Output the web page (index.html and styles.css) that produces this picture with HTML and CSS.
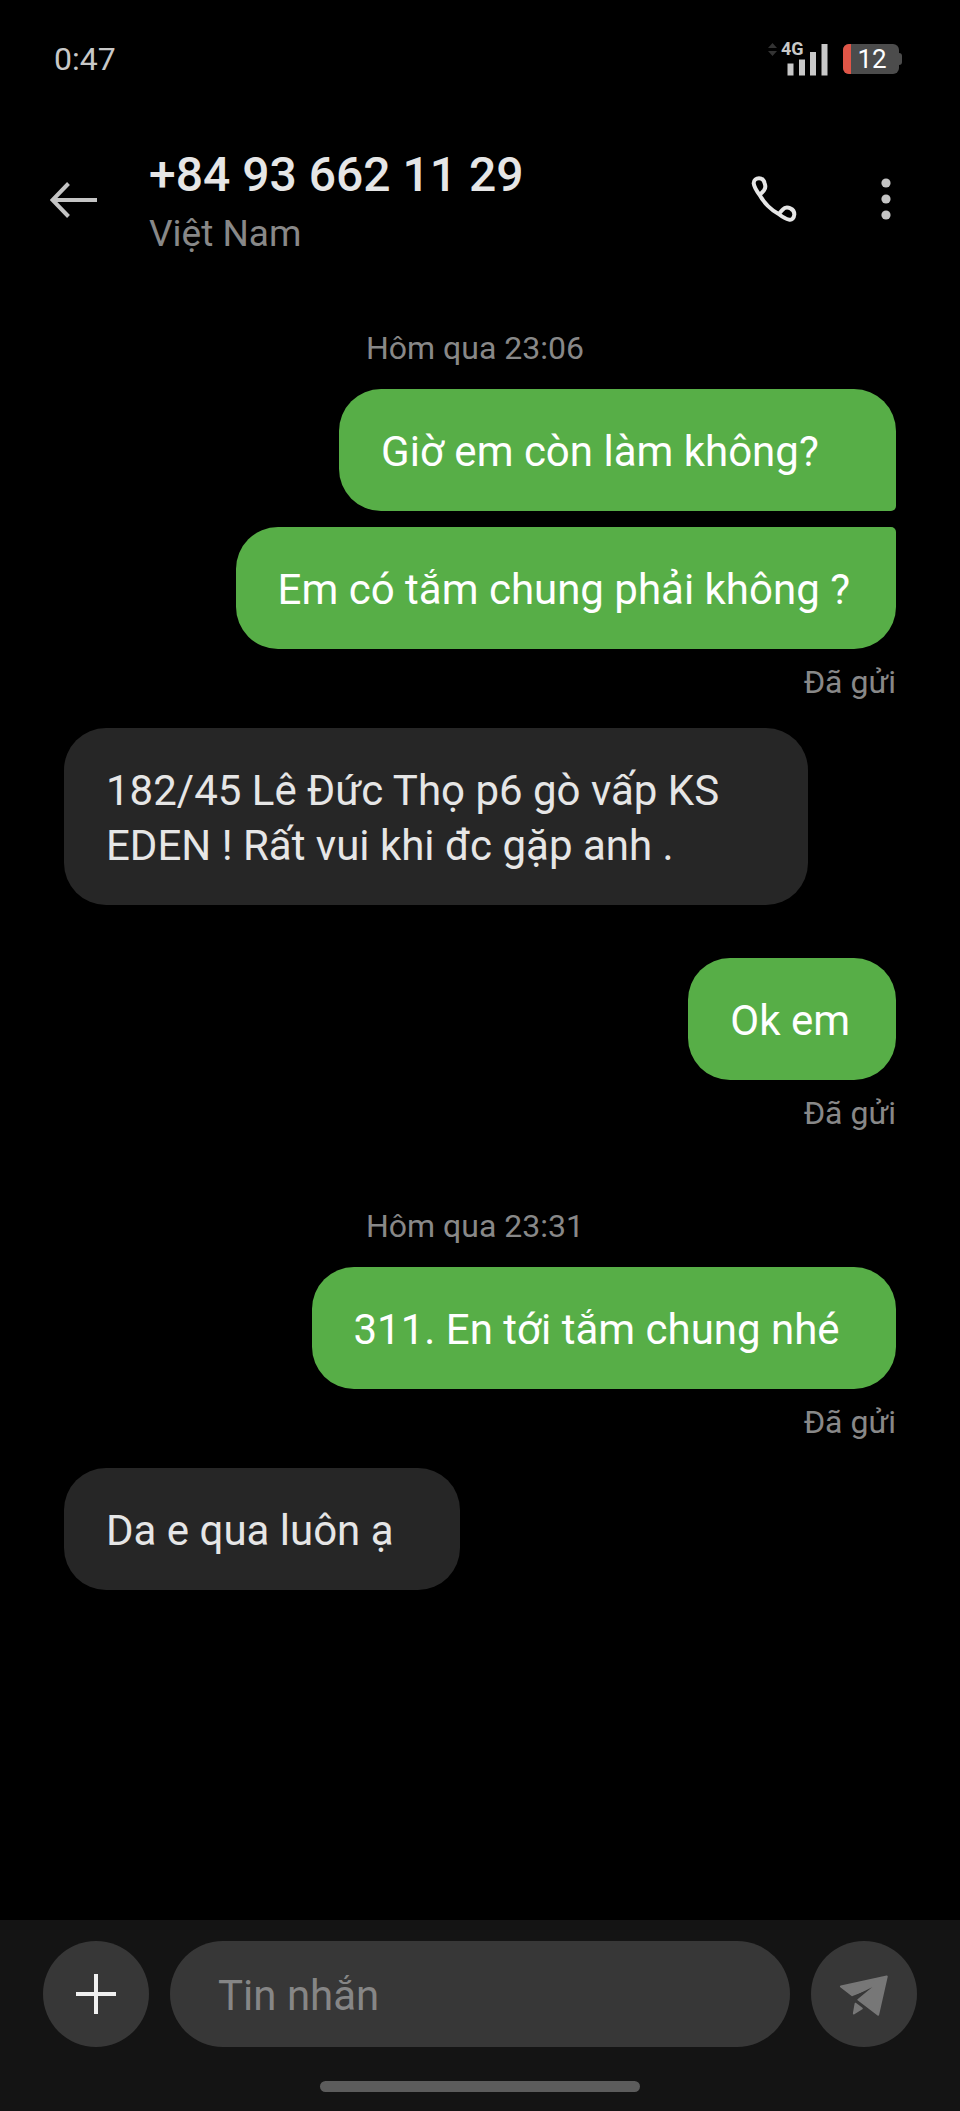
FILE: index.html
```html
<!DOCTYPE html>
<html lang="vi">
<head>
<meta charset="utf-8">
<meta name="viewport" content="width=device-width, initial-scale=1">
<title>+84 93 662 11 29</title>
<link rel="stylesheet" href="styles.css">
</head>
<body>
<div class="statusbar">
  <time class="clock">0:47</time>
  <div class="indicators">
    <div class="signal">
      <svg class="signal-icon" viewBox="0 0 60 34" aria-hidden="true">
        <path class="data-arrows" d="M0 6 4.500 1 9 6zM0 9h9l-4.500 5z"/>
        <path class="bars" d="M19.500 21.500h6v12h-6zM31 17.500h6v16h-6zM42 10h6v23.500h-6zM53.500 2h6v31.500h-6z"/>
      </svg>
      <span class="network">4G</span>
    </div>
    <div class="battery">
      <svg class="battery-icon" viewBox="0 0 60 32" aria-hidden="true">
        <rect x="1" y="1" width="56" height="30" rx="6" fill="#4c4c4c"/>
        <path d="M56 10h1a3 3 0 0 1 3 3v6a3 3 0 0 1-3 3h-1z" fill="#4c4c4c"/>
        <path d="M9 1H7a6 6 0 0 0-6 6v18a6 6 0 0 0 6 6h2z" fill="#e05547"/>
      </svg>
      <span class="level">12</span>
    </div>
  </div>
</div>

<header class="header">
  <button class="icon-button" type="button" aria-label="Quay lại">
    <svg class="icon-back" viewBox="0 0 48 48" fill="none" stroke="#c4c4c4" stroke-width="4" aria-hidden="true"><path d="M47 25H3M18.500 8.500 2.500 25l16 16.500"/></svg>
  </button>
  <div class="contact">
    <h1 class="contact-name">+84 93 662 11 29</h1>
    <p class="contact-place">Việt Nam</p>
  </div>
  <button class="icon-button" type="button" aria-label="Gọi">
    <svg class="icon-call" viewBox="90 74 144 144" fill="none" stroke="#e6e6e6" stroke-width="12" stroke-linejoin="round" aria-hidden="true"><path d="M119 134C109 121 102 107 101 99C101 89 109 84 117 84C127 84 132 91 134 99C138 110 137 114 132 120L119 134C131 156 154 180 176 191L188 178C194 171 203 170 211 174C220 178 223 184 223 192C222 203 216 210 207 208C197 206 185 198 176 191"/></svg>
  </button>
  <button class="icon-button" type="button" aria-label="Thêm tùy chọn">
    <svg class="icon-more" viewBox="0 0 48 48" fill="#c4c4c4" aria-hidden="true"><circle cx="24" cy="8" r="4.600"/><circle cx="24" cy="24" r="4.600"/><circle cx="24" cy="40" r="4.600"/></svg>
  </button>
</header>

<main class="thread">
  <time class="date">Hôm qua 23:06</time>
  <p class="bubble sent joined-below">Giờ em còn làm không?&nbsp;&nbsp;&nbsp;</p>
  <p class="bubble sent joined-above">Em có tắm chung phải không ?</p>
  <p class="receipt">Đã gửi</p>
  <p class="bubble received">182/45 Lê Đức Thọ p6 gò vấp KS EDEN ! Rất vui khi đc gặp anh .</p>
  <p class="bubble sent reply">Ok em</p>
  <p class="receipt">Đã gửi</p>
  <time class="date later">Hôm qua 23:31</time>
  <p class="bubble sent">311. En tới tắm chung nhé&nbsp;</p>
  <p class="receipt">Đã gửi</p>
  <p class="bubble received">Da e qua luôn ạ&nbsp;&nbsp;</p>
</main>

<footer class="footer">
  <form class="composer">
    <button class="round-button" type="button" aria-label="Đính kèm">
      <svg viewBox="0 0 106 106" stroke="#f0f0f0" stroke-width="4" aria-hidden="true"><path d="M33 53h40M53 33v40"/></svg>
    </button>
    <input class="message-input" type="text" placeholder="Tin nhắn" aria-label="Tin nhắn">
    <button class="round-button" type="button" aria-label="Gửi">
      <svg viewBox="633 122 319 319" fill="#777" stroke="#777" stroke-width="6" stroke-linejoin="round" aria-hidden="true"><path d="M723 259 861 229 835 344 775 298 815 263 757 285zM767 311 786 325 762 340z"/><path d="M756 291 817 261 771 299" fill="#373737" stroke="none"/></svg>
    </button>
  </form>
  <div class="home-indicator"></div>
</footer>
</body>
</html>
```
FILE: styles.css
```css
* { box-sizing: border-box; }

body {
  margin: 0;
  min-height: 100vh;
  display: flex;
  flex-direction: column;
  background: #000;
  color: #e6e6e6;
  font-family: Roboto, "Noto Sans", sans-serif;
}

h1, p { margin: 0; }

button {
  padding: 0;
  border: 0;
  background: none;
  cursor: pointer;
}

svg { display: block; }

.statusbar {
  display: flex;
  align-items: center;
  justify-content: space-between;
  height: 118px;
  padding: 0 58px 0 54px;
}

.clock {
  color: #c8c8c8;
  font-size: 32px;
  line-height: 40px;
}

.indicators {
  display: flex;
  align-items: center;
  gap: 14px;
}

.signal { position: relative; }

.signal-icon {
  width: 60px;
  height: 34px;
}

.data-arrows { fill: #333; }
.bars { fill: #c8c8c8; }

.network {
  position: absolute;
  top: 0;
  left: 13px;
  color: #c8c8c8;
  font-size: 18px;
  font-weight: 700;
  line-height: 14px;
}

.battery {
  display: grid;
  place-items: center;
}

.battery-icon,
.level { grid-area: 1 / 1; }

.battery-icon {
  width: 60px;
  height: 32px;
}

.level {
  color: #fff;
  font-size: 26px;
  line-height: 32px;
}

.header {
  display: flex;
  align-items: center;
  gap: 64px;
  height: 162px;
  padding: 0 50px;
}

.contact {
  flex: 1;
  margin-left: -13px;
  padding-top: 14px;
}

.contact-name {
  font-size: 48px;
  font-weight: 500;
  line-height: 56px;
}

.contact-place {
  color: #888;
  font-size: 37px;
  line-height: 62px;
}

.icon-button,
.icon-button svg {
  width: 48px;
  height: 48px;
}

.thread {
  flex: 1;
  display: flex;
  flex-direction: column;
  align-items: flex-start;
  padding: 48px 64px;
}

.date {
  align-self: center;
  padding-right: 10px;
  margin-bottom: 21px;
  color: #888;
  font-size: 32px;
  line-height: 40px;
}

.later { margin-top: 47px; }

.bubble {
  max-width: 744px;
  padding: 35px 46px 32px 42px;
  border-radius: 42px;
  font-size: 42px;
  line-height: 55px;
}

.sent {
  align-self: flex-end;
  background: #57ae47;
  color: #fff;
}

.received { background: #262626; }
.reply { margin-top: 53px; }

.joined-below {
  border-bottom-right-radius: 5px;
  margin-bottom: 16px;
}

.joined-above { border-top-right-radius: 5px; }

.receipt {
  align-self: flex-end;
  margin: 13px 0 26px;
  color: #888;
  font-size: 32px;
  line-height: 40px;
}

.footer {
  padding: 21px 43px 19px;
  background: #141414;
}

.composer {
  display: flex;
  gap: 21px;
}

.round-button {
  flex: none;
  width: 106px;
  height: 106px;
  border-radius: 50%;
  background: #373737;
}

.message-input {
  flex: 1;
  min-width: 0;
  height: 106px;
  padding: 2px 48px 0;
  border: 0;
  border-radius: 53px;
  outline: 0;
  background: #373737;
  color: #e6e6e6;
  font: 42px Roboto, "Noto Sans", sans-serif;
}

.message-input::placeholder { color: #868686; }

.home-indicator {
  width: 320px;
  max-width: 50%;
  height: 11px;
  margin: 34px auto 0;
  border-radius: 6px;
  background: #5c5c5c;
}
```
